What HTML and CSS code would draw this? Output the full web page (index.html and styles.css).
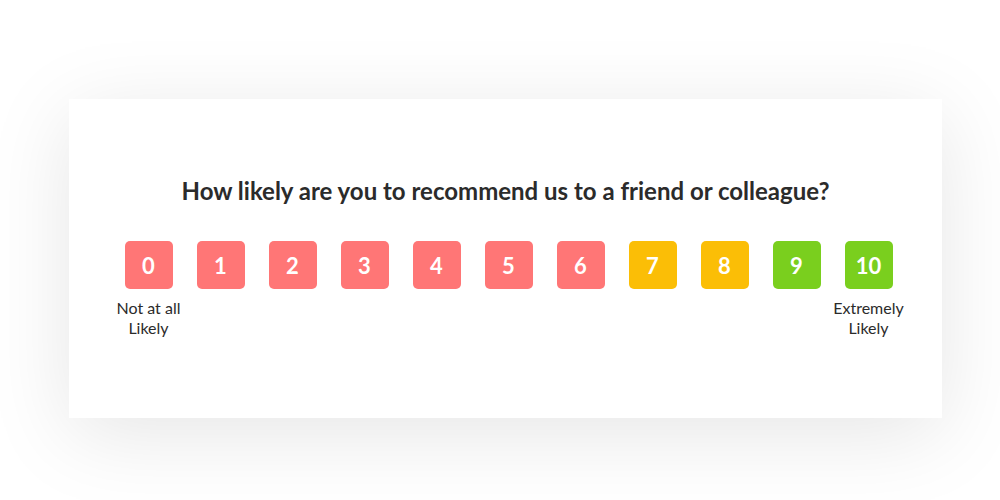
FILE: index.html
```html
<!DOCTYPE html>
<html>
<head>
<meta charset="utf-8">
<link rel="stylesheet" href="styles.css">
</head>
<body>
<div class="card">
  <h1 class="question">How likely are you to recommend us to a friend or colleague?</h1>
  <div class="scale">
    <div class="item"><div class="btn red">0</div><div class="label">Not at all Likely</div></div>
    <div class="item"><div class="btn red">1</div></div>
    <div class="item"><div class="btn red">2</div></div>
    <div class="item"><div class="btn red">3</div></div>
    <div class="item"><div class="btn red">4</div></div>
    <div class="item"><div class="btn red">5</div></div>
    <div class="item"><div class="btn red">6</div></div>
    <div class="item"><div class="btn yellow">7</div></div>
    <div class="item"><div class="btn yellow">8</div></div>
    <div class="item"><div class="btn green">9</div></div>
    <div class="item"><div class="btn green">10</div><div class="label">Extremely Likely</div></div>
  </div>
</div>
</body>
</html>
```

FILE: styles.css
```css
html, body {
  margin: 0;
  background: #ffffff;
}
body {
  box-sizing: border-box;
  height: 500px;
  overflow: hidden;
  padding: 99px 0 0 69px;
  font-family: Lato, "Open Sans", sans-serif;
}
.card {
  width: 873px;
  height: 319px;
  box-sizing: border-box;
  background: #fff;
  box-shadow: 0 16px 80px rgba(0, 0, 0, 0.1);
  padding-top: 77px;
  display: flex;
  flex-direction: column;
  align-items: center;
}
.question {
  margin: 0 0 35px 0;
  font-size: 24px;
  line-height: 30px;
  font-weight: 700;
  color: #2b2b2b;
}
.scale {
  display: flex;
  gap: 24px;
  padding-left: 6px;
}
.item {
  width: 48px;
  display: flex;
  flex-direction: column;
  align-items: center;
}
.btn {
  width: 48px;
  height: 48px;
  border-radius: 5px;
  color: #fff;
  font-weight: 700;
  font-size: 22px;
  display: flex;
  align-items: center;
  justify-content: center;
}
.red { background: #ff7676; }
.yellow { background: #fbbe06; }
.green { background: #7acf1e; }
.label {
  width: 100px;
  flex-shrink: 0;
  margin-top: 9px;
  text-align: center;
  font-size: 16px;
  line-height: 20px;
  color: #2b2b2b;
}
```
